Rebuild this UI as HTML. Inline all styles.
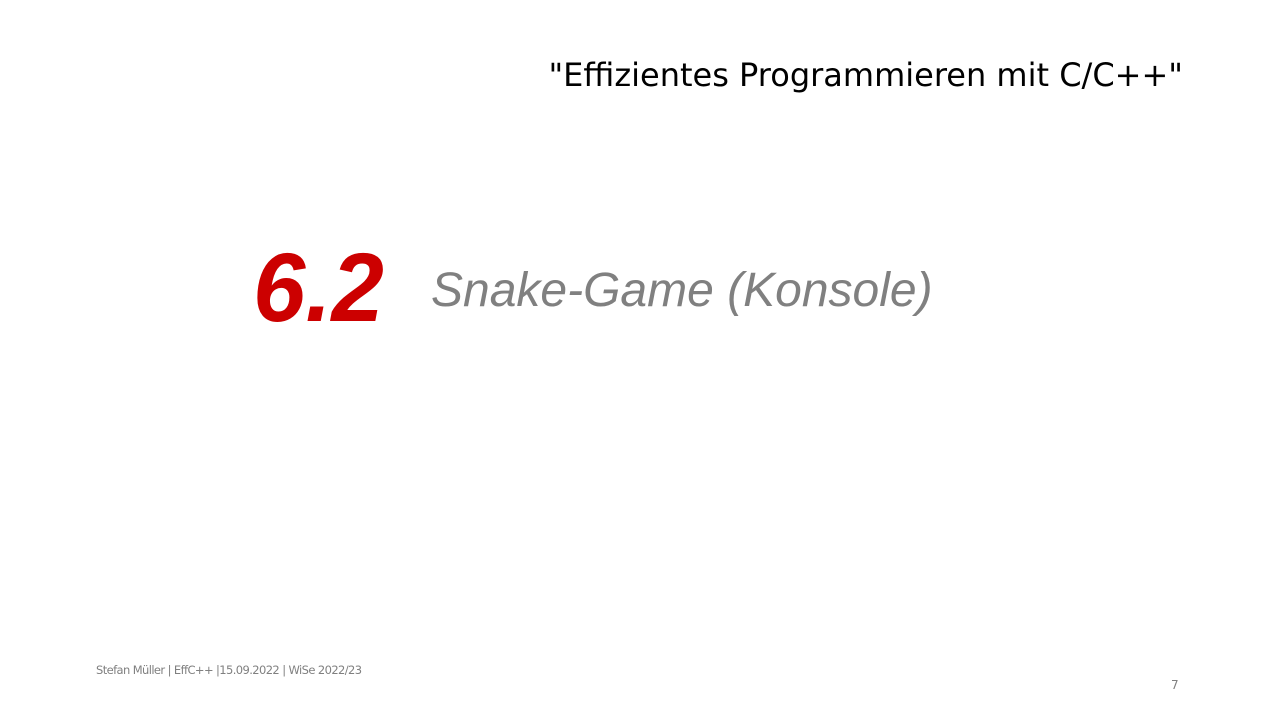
<!DOCTYPE html>
<html><head><meta charset="utf-8"><style>
html,body{margin:0;padding:0;background:#fff;}
body{width:1280px;height:720px;position:relative;overflow:hidden;}
.t{position:absolute;white-space:nowrap;}
#hdr{right:97px;top:56px;font-family:"DejaVu Sans",sans-serif;font-size:32px;color:#000;}
#num{left:253px;top:232px;font-family:"Liberation Sans",sans-serif;font-weight:bold;font-style:italic;font-size:97px;color:#cc0000;letter-spacing:0px;transform:scaleX(0.97);transform-origin:left;}
#sub{left:431px;top:263px;font-family:"Liberation Sans",sans-serif;font-style:italic;font-size:48px;color:#808080;}
#foot{left:96px;top:663px;font-family:"DejaVu Sans",sans-serif;font-size:11.5px;color:#808080;letter-spacing:-0.6px;}
#pg{left:1171px;top:678px;font-family:"DejaVu Sans",sans-serif;font-size:12px;color:#808080;}
</style></head><body>
<div class="t" id="hdr">"Effizientes Programmieren mit C/C++"</div>
<div class="t" id="num">6.2</div>
<div class="t" id="sub">Snake-Game (Konsole)</div>
<div class="t" id="foot">Stefan Müller | EffC++ |15.09.2022 | WiSe 2022/23</div>
<div class="t" id="pg">7</div>
</body></html>
